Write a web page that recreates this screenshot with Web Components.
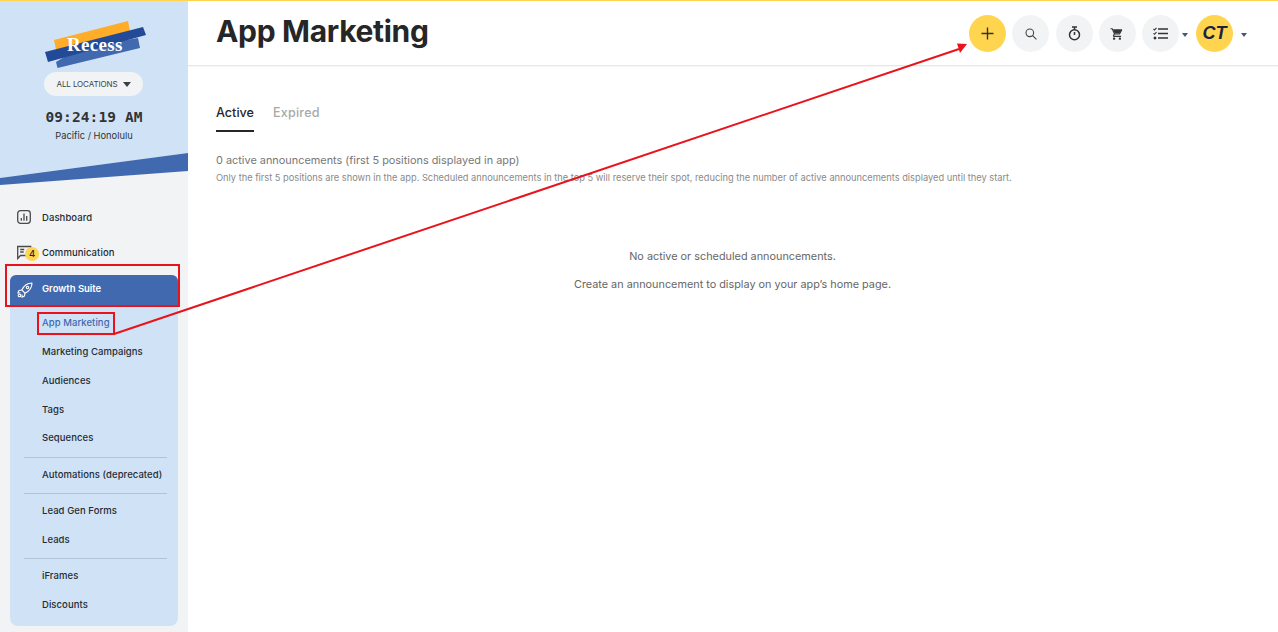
<!DOCTYPE html>
<html>
<head>
<meta charset="utf-8">
<title>App Marketing</title>
<style>
  html, body { margin: 0; height: 100%; overflow: hidden; }
  body { font-family: Inter, "Liberation Sans", sans-serif; color: #262626; background: #fff; }
</style>
</head>
<body>
<app-shell>
  <side-nav slot="side"></side-nav>
  <top-bar slot="top" heading="App Marketing"></top-bar>
  <announcement-page slot="main"></announcement-page>
</app-shell>
<markup-layer></markup-layer>

<script>
class AppShell extends HTMLElement {
  connectedCallback() {
    this.attachShadow({ mode: 'open' });
    this.shadowRoot.innerHTML = `
      <style>
        :host { display: grid; grid-template-columns: 188px 1fr; grid-template-rows: 66px 1fr; height: 632px; box-sizing: border-box; border-top: 1px solid #ffd54f; }
        .side { grid-row: 1 / 3; min-height: 0; }
        .top { min-width: 0; }
        .main { min-width: 0; }
      </style>
      <div class="side"><slot name="side"></slot></div>
      <div class="top"><slot name="top"></slot></div>
      <div class="main"><slot name="main"></slot></div>
    `;
  }
}

class SideBrand extends HTMLElement {
  connectedCallback() {
    this.attachShadow({ mode: 'open' });
    this.shadowRoot.innerHTML = `
      <style>
        :host { display: block; position: relative; height: 184px; background: #f1f3f5; }
        .panel { background: #d0e3f6; height: 152px; display: flex; flex-direction: column; align-items: center; box-sizing: border-box; padding-top: 17px; }
        .logo { display: block; width: 110px; height: 50px; }
        .logo text { font-family: "Liberation Serif", serif; font-size: 19px; fill: #fff; font-weight: 700; letter-spacing: .3px; }
        .loc { margin: 4px 0 0 -1px; width: 99px; height: 24px; border-radius: 12px; background: #f1f3f5; display: flex; align-items: center; justify-content: center; gap: 5px; font-size: 8px; letter-spacing: -.1px; color: #3c4043; }
        .tri { width: 0; height: 0; border-left: 4.5px solid transparent; border-right: 4.5px solid transparent; border-top: 5.5px solid #3c4043; }
        .clock { margin-top: 12px; font: 700 14.5px/18px "DejaVu Sans Mono", "Liberation Mono", monospace; color: #333; letter-spacing: .1px; }
        .zone { margin-top: 4px; font-size: 9.3px; line-height: 12px; color: #333; }
        svg.band { position: absolute; left: 0; top: 152px; width: 188px; height: 33px; display: block; }
      </style>
      <div class="panel">
        <svg class="logo" viewBox="0 0 110 50">
          <polygon points="15,22 89,3 92,18 18,36" fill="#ffac28"/>
          <polygon points="17,44 18.5,50 101,30 99,20 40,30" fill="#4169b0"/>
          <polygon points="6,34 104,9 107,17 9,44" fill="#234a96"/>
          <text x="28" y="33">Recess</text>
        </svg>
        <div class="loc">ALL LOCATIONS <span class="tri"></span></div>
        <div class="clock">09:24:19 AM</div>
        <div class="zone">Pacific / Honolulu</div>
      </div>
      <svg class="band" viewBox="0 0 188 33">
        <polygon points="0,0 188,0 0,25" fill="#d0e3f6"/>
        <polygon points="0,25 188,0 188,18 0,32" fill="#4169b0"/>
      </svg>
    `;
  }
}

class NavItem extends HTMLElement {
  connectedCallback() {
    this.attachShadow({ mode: 'open' });
    this.shadowRoot.innerHTML = `
      <style>
        :host { display: flex; align-items: center; height: 35px; position: relative; font-size: 9.5px; font-weight: 500; color: #262b33; letter-spacing: .08px; }
        .ic { width: 32px; box-sizing: border-box; padding-left: 7px; flex: none; display: flex; }
        :host([active]) { background: #4169b0; color: #fff; font-weight: 600; letter-spacing: 0; border-radius: 6px 6px 0 0; margin: 5.5px 0 0 10px; width: 168px; height: 26px; padding-bottom: 5px; }
        :host([active]) .ic { position: relative; top: 2px; }
      </style>
      <span class="ic"><slot name="icon"></slot></span>
      <slot></slot>
    `;
  }
}

class SubItem extends HTMLElement {
  connectedCallback() {
    this.attachShadow({ mode: 'open' });
    this.shadowRoot.innerHTML = `
      <style>
        :host { display: flex; align-items: center; height: 28.75px; padding-left: 32px; font-size: 9.5px; font-weight: 500; color: #262b33; letter-spacing: .06px; white-space: nowrap; }
        :host([current]) { color: #3e68b0; }
      </style>
      <slot></slot>
    `;
  }
}

class SideNav extends HTMLElement {
  connectedCallback() {
    this.attachShadow({ mode: 'open' });
    this.shadowRoot.innerHTML = `
      <style>
        :host { display: block; height: 631px; background: #f1f3f5; overflow: hidden; }
        nav { padding-top: 14.5px; }
        .top-items { padding-left: 10px; }
        .sub { margin: 0 10px; width: 168px; background: #d0e3f6; border-radius: 0 0 8px 8px; padding: 2.5px 0 7.5px; box-sizing: border-box; }
        hr { border: 0; border-top: 1px solid #b2c3d3; margin: 4.5px 11px 2px 14px; }
        .badge { position: absolute; left: 15px; top: 12px; width: 14px; height: 14px; border-radius: 50%; background: #ffd54f; color: #262b33; font-size: 9.5px; font-weight: 500; display: flex; align-items: center; justify-content: center; }
        .comm { position: relative; display: block; }
        svg { display: block; }
      </style>
      <side-brand></side-brand>
      <nav>
        <div class="top-items">
          <nav-item>
            <svg slot="icon" width="14" height="14" viewBox="0 0 14 14" fill="none" stroke="#4a4a4a" stroke-width="1.3"><rect x=".7" y=".7" width="12.6" height="12.6" rx="2.8"/><path d="M4.3 10.7V8M7 10.7V3.5M9.7 10.7V6"/></svg>
            Dashboard
          </nav-item>
          <span class="comm">
            <nav-item>
              <svg slot="icon" width="16" height="16" viewBox="0 0 16 16" fill="none" stroke="#4a4a4a" stroke-width="1.3"><path d="M.7 2.5h13v9H3.5L.7 14.5z"/><path d="M3.2 5.5h4M3.2 8h3.5"/></svg>
              Communication
            </nav-item>
            <span class="badge">4</span>
          </span>
        </div>
        <nav-item active>
          <svg slot="icon" width="16" height="16" viewBox="0 0 16 16" fill="none" stroke="#fff" stroke-width="1.1" stroke-linejoin="round"><path d="M15 1C10.5 1 7 3.5 4.8 8L8 11.2C12.5 9 15 5.5 15 1z"/><path d="M4.8 8L2 8.5.8 11h2.7M8 11.2l-.5 2.8L5 15.2V12.5"/><circle cx="10.5" cy="5.5" r="1.2"/><circle cx="2.5" cy="13.5" r="1.3"/></svg>
          Growth Suite
        </nav-item>
        <div class="sub">
          <sub-item current>App Marketing</sub-item>
          <sub-item>Marketing Campaigns</sub-item>
          <sub-item>Audiences</sub-item>
          <sub-item>Tags</sub-item>
          <sub-item>Sequences</sub-item>
          <hr>
          <sub-item>Automations (deprecated)</sub-item>
          <hr>
          <sub-item>Lead Gen Forms</sub-item>
          <sub-item>Leads</sub-item>
          <hr>
          <sub-item>iFrames</sub-item>
          <sub-item>Discounts</sub-item>
        </div>
      </nav>
    `;
  }
}

class RoundButton extends HTMLElement {
  connectedCallback() {
    this.attachShadow({ mode: 'open' });
    this.shadowRoot.innerHTML = `
      <style>
        :host { display: flex; align-items: center; justify-content: center; width: 37px; height: 37px; border-radius: 50%; background: #f1f3f5; color: #333; flex: none; }
        :host([accent]) { background: #ffd54f; }
      </style>
      <slot></slot>
    `;
  }
}

class TopBar extends HTMLElement {
  connectedCallback() {
    this.attachShadow({ mode: 'open' });
    this.shadowRoot.innerHTML = `
      <style>
        :host { display: flex; align-items: center; justify-content: space-between; height: 64px; border-bottom: 1px solid #e6e7e9; box-shadow: 0 1px 1px rgba(0,0,0,.03); padding: 0 30.8px 0 28px; }
        h1 { margin: 0 0 5px; font-size: 30px; line-height: 36px; font-weight: 700; color: #262626; letter-spacing: -.32px; }
        .tools { display: flex; align-items: center; gap: 6.25px; margin-top: 1px; }
        .caret { width: 0; height: 0; border-left: 3.5px solid transparent; border-right: 3.5px solid transparent; border-top: 4px solid #4a5578; margin: 2px 0 0 1.95px; }
        .list { margin-left: -3.75px; }
        .ct { font: italic 700 18px "Liberation Sans", sans-serif; color: #1d2440; }
        svg { display: block; }
        .gap { margin-left: 2.25px; }
      </style>
      <h1>${this.getAttribute('heading')}</h1>
      <div class="tools">
        <round-button accent><svg width="15" height="15" viewBox="0 0 15 15" stroke="#333" stroke-width="1.4"><path d="M7.5 1.5v12M1.5 7.5h12"/></svg></round-button>
        <round-button><svg width="12" height="12" viewBox="0 0 12 12" fill="none" stroke="#444" stroke-width="1.1"><circle cx="4.8" cy="4.8" r="3.8"/><path d="M7.6 7.6l3.8 3.8"/></svg></round-button>
        <round-button><svg width="13" height="15" viewBox="0 0 13 15" fill="none" stroke="#333" stroke-width="1.5"><circle cx="6.5" cy="8.7" r="5"/><path d="M4 1h5M6.5 1v2.5M6.5 6v3"/></svg></round-button>
        <round-button><svg width="14" height="14" viewBox="0 0 24 24" fill="#333"><path d="M7 18c-1.1 0-2 .9-2 2s.9 2 2 2 2-.9 2-2-.9-2-2-2zm10 0c-1.1 0-2 .9-2 2s.9 2 2 2 2-.9 2-2-.9-2-2-2zM7.2 14.8l.03-.12.9-1.63h7.45c.75 0 1.41-.41 1.75-1.03l3.86-7.01L19.4 4l-3.87 7H8.53L4.27 2H1v2h2l3.6 7.59-1.35 2.44C4.52 15.37 5.48 17 7 17h12v-2H7.42c-.13 0-.22-.09-.22-.2z"/><path d="M5 4h15l-4 7H8z"/></svg></round-button>
        <round-button><svg width="15" height="13" viewBox="0 0 15 13" fill="none" stroke="#333"><path d="M5 2h10M5 6.5h10M5 11h10" stroke-width="1.7"/><path d="M.5 2l1 1L3.5.8M.5 6.3l1 1 2-2.2" stroke-width="1.1"/><path d="M1 10h2v2H1z" fill="#333" stroke-width=".6"/></svg></round-button>
        <span class="caret list"></span>
        <round-button accent class="gap"><span class="ct">CT</span></round-button>
        <span class="caret"></span>
      </div>
    `;
  }
}

class TabStrip extends HTMLElement {
  connectedCallback() {
    this.attachShadow({ mode: 'open' });
    this.shadowRoot.innerHTML = `
      <style>
        :host { display: flex; gap: 19px; font-size: 12.6px; font-weight: 500; }
        span { display: block; line-height: 16px; padding-bottom: 9px; }
        .on { color: #262626; border-bottom: 2px solid #262626; }
        .off { color: #a9a9a9; letter-spacing: .2px; }
      </style>
      <span class="on">Active</span>
      <span class="off">Expired</span>
    `;
  }
}

class AnnouncementPage extends HTMLElement {
  connectedCallback() {
    this.attachShadow({ mode: 'open' });
    this.shadowRoot.innerHTML = `
      <style>
        :host { display: block; padding: 38px 28px 0; color: #7a7a7a; }
        .count { margin-top: 21px; font-size: 10.9px; line-height: 14px; color: #777; }
        .note { margin-top: 5px; font-size: 9.28px; line-height: 11px; color: #8a8a8a; white-space: nowrap; }
        .empty { margin-top: 66px; text-align: center; font-size: 10.85px; line-height: 14px; color: #666; width: 1033px; }
        .empty p { margin: 0 0 14px; }
      </style>
      <tab-strip></tab-strip>
      <div class="count">0 active announcements (first 5 positions displayed in app)</div>
      <div class="note">Only the first 5 positions are shown in the app. Scheduled announcements in the top 5 will reserve their spot, reducing the number of active announcements displayed until they start.</div>
      <div class="empty">
        <p>No active or scheduled announcements.</p>
        <p>Create an announcement to display on your app’s home page.</p>
      </div>
    `;
  }
}

// red annotation boxes and arrow drawn over the screenshot
class MarkupLayer extends HTMLElement {
  connectedCallback() {
    this.attachShadow({ mode: 'open' });
    this.shadowRoot.innerHTML = `
      <style>
        :host { position: absolute; left: 0; top: 0; width: 1278px; height: 632px; pointer-events: none; }
        svg { display: block; }
      </style>
      <svg width="1278" height="632" viewBox="0 0 1278 632" fill="none" stroke="#e8141c">
        <rect x="6" y="265" width="173" height="41" stroke-width="2"/>
        <rect x="38" y="313" width="76" height="21" stroke-width="2"/>
        <path d="M114 334L959 49" stroke-width="2"/>
        <path d="M967 44L957 43.5L960 53z" fill="#e8141c" stroke="none"/>
      </svg>
    `;
  }
}

customElements.define('app-shell', AppShell);
customElements.define('side-brand', SideBrand);
customElements.define('nav-item', NavItem);
customElements.define('sub-item', SubItem);
customElements.define('side-nav', SideNav);
customElements.define('round-button', RoundButton);
customElements.define('top-bar', TopBar);
customElements.define('tab-strip', TabStrip);
customElements.define('announcement-page', AnnouncementPage);
customElements.define('markup-layer', MarkupLayer);
</script>
</body>
</html>
